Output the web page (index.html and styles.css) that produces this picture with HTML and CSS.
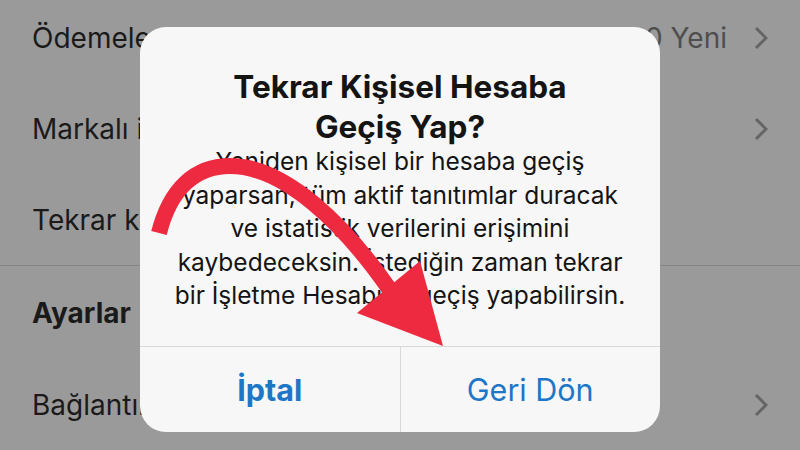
FILE: index.html
```html
<!DOCTYPE html>
<html lang="tr">
<head>
    <meta charset="UTF-8">
    <meta name="viewport" content="width=device-width, initial-scale=1.0">
    <title>Tekrar Kişisel Hesaba Geçiş Yap?</title>
    <link rel="stylesheet" href="styles.css">
</head>
<body>
    <div class="screen">
        <ul class="list">
            <li class="row">
                <span class="label">Ödemeler</span>
                <span class="meta">0 Yeni</span>
                <svg class="chevron" viewBox="0 0 14 24"><path d="M2 2 L12 12 L2 22"/></svg>
            </li>
            <li class="row">
                <span class="label">Markalı içerik</span>
                <svg class="chevron" viewBox="0 0 14 24"><path d="M2 2 L12 12 L2 22"/></svg>
            </li>
            <li class="row">
                <span class="label">Tekrar kişisel hesaba geç</span>
            </li>
            <li class="row section">
                <span class="label">Ayarlar</span>
            </li>
            <li class="row">
                <span class="label">Bağlantılı hesaplar</span>
                <svg class="chevron" viewBox="0 0 14 24"><path d="M2 2 L12 12 L2 22"/></svg>
            </li>
        </ul>

        <div class="alert">
            <div class="alert-body">
                <div class="alert-title">Tekrar Kişisel Hesaba<br>Geçiş Yap?</div>
                <div class="alert-text">
                    Yeniden kişisel bir hesaba geçiş<br>
                    yaparsan, tüm aktif tanıtımlar duracak<br>
                    ve istatistik verilerini erişimini<br>
                    kaybedeceksin. İstediğin zaman tekrar<br>
                    bir İşletme Hesabına geçiş yapabilirsin.
                </div>
            </div>
            <div class="alert-buttons">
                <button class="alert-button cancel">İptal</button>
                <button class="alert-button">Geri Dön</button>
            </div>
        </div>

        <!-- red pointer drawn over the alert -->
        <svg class="arrow" viewBox="0 0 800 450">
            <path class="arrow-line" d="M159 233 C170 189 195 166 230 166 C285 166 345 225 390 290"/>
            <polygon class="arrow-head" points="357,313 420,261 443,346"/>
        </svg>
    </div>
</body>
</html>
```

FILE: styles.css
```css
body, html {
    margin: 0;
    padding: 0;
    width: 100%;
    height: 100%;
    overflow: hidden;
    font-family: "Inter", "Noto Sans", sans-serif;
}
.screen {
    position: relative;
    width: 800px;
    height: 450px;
    background: #9a9a9a;
    overflow: hidden;
}
.list {
    list-style: none;
    margin: -8px 0 0 0;
    padding: 0;
}
.row {
    display: flex;
    align-items: center;
    height: 91px;
    padding: 0 32px;
    font-size: 28px;
    color: #1a1a1a;
}
.row .label {
    white-space: nowrap;
    margin-right: auto;
}
.row .meta {
    color: #4e4e4e;
    margin-right: 27px;
}
.row.section {
    height: 93px;
    border-top: 1px solid #858585;
    font-weight: 700;
}
.chevron {
    width: 14px;
    height: 24px;
    fill: none;
    stroke: #646464;
    stroke-width: 3;
}
.alert {
    position: absolute;
    left: 140px;
    top: 27px;
    width: 520px;
    height: 405px;
    background: #f7f7f7;
    border-radius: 26px;
    display: flex;
    flex-direction: column;
    overflow: hidden;
    color: #141414;
}
.alert-body {
    flex: 1;
    text-align: center;
    padding-top: 40px;
}
.alert-title {
    font-size: 31.5px;
    font-weight: 700;
    line-height: 40px;
}
.alert-text {
    margin-top: -2px;
    font-size: 24.5px;
    line-height: 33.5px;
}
.alert-buttons {
    display: flex;
    height: 85px;
    border-top: 1px solid #d8d8d8;
}
.alert-button {
    flex: 1;
    border: none;
    background: none;
    font-family: "Inter", "Noto Sans", sans-serif;
    font-size: 30.5px;
    color: #1d76c6;
    padding: 0 0 1px 0;
}
.alert-button + .alert-button {
    border-left: 1px solid #d8d8d8;
}
.alert-button.cancel {
    font-weight: 700;
}
.arrow {
    position: absolute;
    left: 0;
    top: 0;
    width: 800px;
    height: 450px;
}
.arrow-line {
    fill: none;
    stroke: #ee2a40;
    stroke-width: 16;
}
.arrow-head {
    fill: #ee2a40;
}
```
